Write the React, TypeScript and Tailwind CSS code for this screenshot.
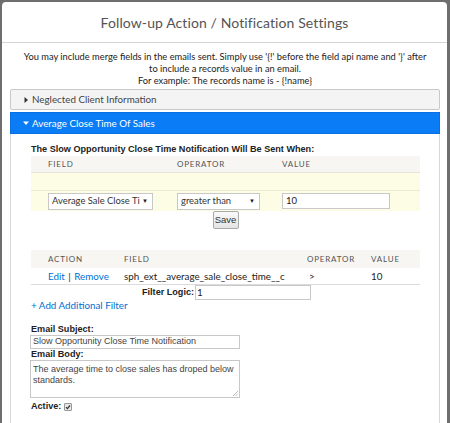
const sans = "font-['Lato','Open_Sans',sans-serif]";
const arial = "font-['Liberation_Sans','Arial',sans-serif]";

function Caret({ down }: { down?: boolean }) {
  return (
    <svg width="6" height="6" viewBox="0 0 6 6" className="shrink-0">
      {down ? <path d="M0 1.5h6L3 5z" fill="currentColor" /> : <path d="M1.5 0v6L5 3z" fill="currentColor" />}
    </svg>
  );
}

function Select({ value, w }: { value: string; w: string }) {
  return (
    <div className={`${w} h-[17px] bg-white border border-[#c8c8c8] flex items-center justify-between pl-[3px] pr-[4px]`}>
      <span className={`${sans} text-[9.4px] text-[#333] whitespace-nowrap overflow-hidden`}>{value}</span>
      <span className="text-[6px] text-[#222] leading-none">▼</span>
    </div>
  );
}

export default function App() {
  return (
    <div className="w-[450px] h-[423px] overflow-hidden bg-[#6e6e6e] pl-[2px] pr-[3px] pt-[2px]">
      <div className="bg-white h-[430px] rounded-t-[4px]">
        {/* Header */}
        <div className="h-[41px] border-b border-[#d4d4d4] flex items-center justify-center">
          <h1 className={`${sans} text-[14px] text-[#545454] tracking-[0.1px]`}>Follow-up Action / Notification Settings</h1>
        </div>

        <div className="pl-[8px] pr-[7px] pt-[8px]">
          <p className={`${sans} text-[9.3px] leading-[12px] text-[#222] text-center whitespace-nowrap`}>
            You may include merge fields in the emails sent. Simply use '{"{"}!' before the field api name and '{"}"}' after
            <br />
            to include a records value in an email.
            <br />
            For example: The records name is - {"{"}!name{"}"}
          </p>

          {/* Collapsed section */}
          <div className="mt-[2px] h-[21px] bg-[#f4f4f4] border border-[#c9c9c9] rounded-[2px] flex items-center gap-[3px] pl-[12px] text-[#333]">
            <Caret />
            <span className={`${sans} text-[9.8px] text-[#444]`}>Neglected Client Information</span>
          </div>

          {/* Expanded section */}
          <div className="mt-[2px] h-[22px] bg-[#0a7cf5] border border-[#0a6fe0] flex items-center gap-[3px] pl-[12px] text-white">
            <Caret down />
            <span className={`${sans} text-[9.8px]`}>Average Close Time Of Sales</span>
          </div>

          <div className="border-x border-[#d8d8d8] pl-[20px] pr-[20px] pt-[9px] pb-[20px]">
            <div className={`${arial} font-bold text-[9.1px] text-[#222] leading-[12px]`}>
              The Slow Opportunity Close Time Notification Will Be Sent When:
            </div>

            {/* Criteria table */}
            <div className="w-[389px] mt-[1px]">
              <div className={`${sans} h-[17px] bg-[#f7f6f2] border-b border-[#e6e4dc] flex items-center pl-[17px] text-[8px] tracking-[0.8px] text-[#555]`}>
                <span className="w-[129px]">FIELD</span>
                <span className="w-[105px]">OPERATOR</span>
                <span>VALUE</span>
              </div>
              <div className="h-[18px] bg-[#fdfce4] border-b border-[#ebe9cf]" />
              <div className="h-[20px] bg-[#fdfce4] flex items-center pl-[17px]">
                <div className="w-[129px]">
                  <Select value="Average Sale Close Ti" w="w-[105px]" />
                </div>
                <div className="w-[105px]">
                  <Select value="greater than" w="w-[83px]" />
                </div>
                <div className={`${sans} w-[108px] h-[16px] bg-white border border-[#c8c8c8] text-[9.5px] text-[#222] pl-[3px] flex items-center`}>10</div>
              </div>
              <div className="flex justify-center">
                <button className={`${arial} w-[26px] h-[18px] text-[9.5px] text-[#333] border border-[#a9a9a9] rounded-[2px] bg-gradient-to-b from-[#fafafa] to-[#e4e4e4]`}>
                  Save
                </button>
              </div>
            </div>

            {/* Filters table */}
            <div className="w-[389px] mt-[21px]">
              <div className={`${sans} h-[18px] bg-[#f7f6f2] flex items-center pl-[17px] text-[8px] tracking-[0.8px] text-[#555]`}>
                <span className="w-[76px]">ACTION</span>
                <span className="w-[183px]">FIELD</span>
                <span className="w-[64px]">OPERATOR</span>
                <span>VALUE</span>
              </div>
              <div className={`${sans} h-[17px] border-b border-[#dcdcdc] flex items-center pl-[17px] text-[9.8px] text-[#222]`}>
                <span className="w-[76px] text-[#0070d2]">
                  Edit <span className="text-[#222] mx-[1px]">|</span> Remove
                </span>
                <span className="w-[183px]">sph_ext__average_sale_close_time__c</span>
                <span className="w-[64px] pl-[2px]">&gt;</span>
                <span>10</span>
              </div>
              <div className="flex items-center h-[15px] pl-[111px]">
                <span className={`${arial} font-bold text-[9.1px] text-[#222]`}>Filter Logic:</span>
                <div className={`${sans} ml-[1px] w-[116px] h-[15px] border border-[#c8c8c8] text-[9.8px] text-[#222] pl-[1px] flex items-center`}>1</div>
              </div>
            </div>

            <div className={`${sans} text-[9.8px] text-[#0070d2] leading-[11px]`}>+ Add Additional Filter</div>

            {/* Email */}
            <div className={`${arial} mt-[13px] font-bold text-[9.1px] text-[#222] leading-[11px]`}>Email Subject:</div>
            <div className={`${arial} w-[210px] h-[14px] border border-[#c8c8c8] text-[9px] text-[#444] pl-[2px] flex items-center -ml-[1px]`}>
              Slow Opportunity Close Time Notification
            </div>
            <div className={`${arial} font-bold text-[9.1px] text-[#222] leading-[11px]`}>Email Body:</div>
            <div className={`${arial} relative w-[210px] h-[38px] border border-[#c8c8c8] text-[9px] leading-[11px] text-[#444] px-[2px] pt-[3px] -ml-[1px]`}>
              The average time to close sales has droped below standards.
              <svg width="5" height="5" viewBox="0 0 5 5" className="absolute right-[1px] bottom-[1px]">
                <path d="M5 0L0 5M5 2.5L2.5 5" stroke="#aaa" strokeWidth="0.8" />
              </svg>
            </div>
            <div className="mt-[2px] flex items-center gap-[3px]">
              <span className={`${arial} font-bold text-[9.1px] text-[#222]`}>Active:</span>
              <span className="w-[8px] h-[8px] border border-[#999] bg-[#e6e6e6] rounded-[1px] flex items-center justify-center">
                <svg width="6" height="6" viewBox="0 0 6 6">
                  <path d="M1 3.2l1.4 1.4L5 1.5" stroke="#333" strokeWidth="1.2" fill="none" />
                </svg>
              </span>
            </div>
          </div>
        </div>
      </div>
    </div>
  );
}
